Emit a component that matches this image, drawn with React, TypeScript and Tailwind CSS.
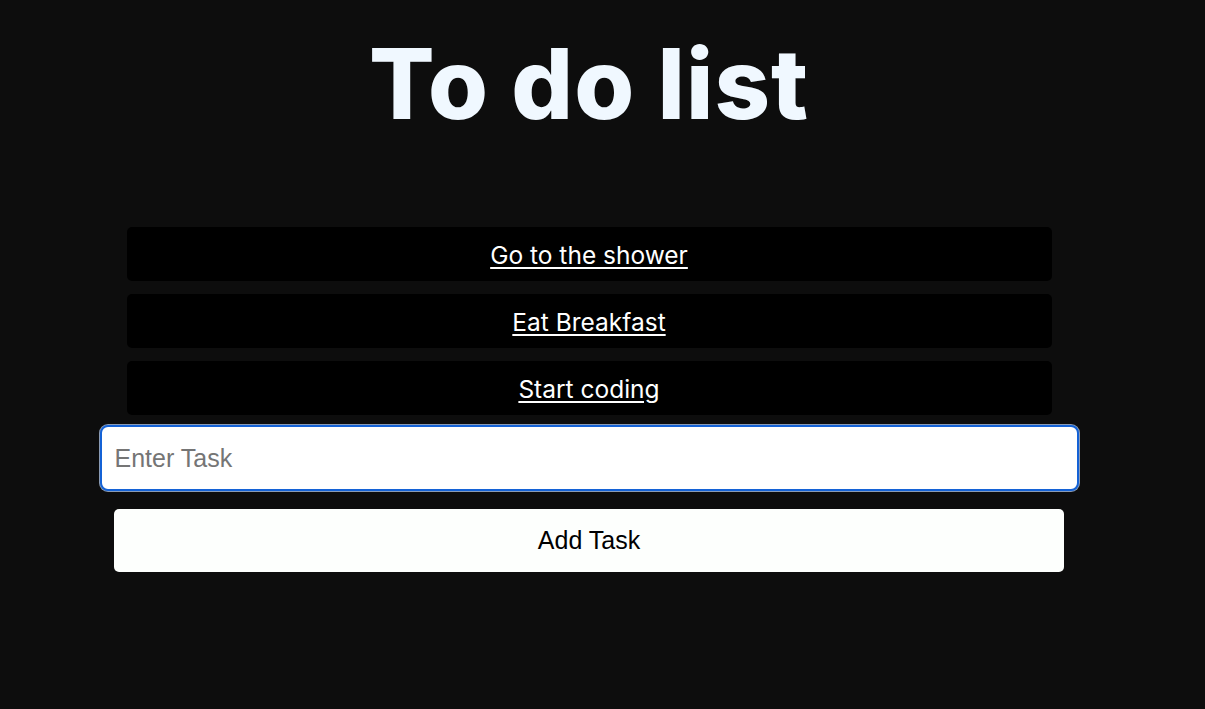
import { useState } from "react";

const initialTasks = ["Go to the shower", "Eat Breakfast", "Start coding"];

export default function App() {
  const [tasks, setTasks] = useState<string[]>(initialTasks);
  const [value, setValue] = useState("");

  const addTask = () => {
    if (!value.trim()) return;
    setTasks([...tasks, value.trim()]);
    setValue("");
  };

  return (
    <div className="min-h-[709px] w-full bg-[#0d0d0d]">
      <div className="w-[1178px] flex flex-col items-center">
        <h1 className="mt-[25px] text-[97px] leading-[117px] font-extrabold tracking-[1px] text-[#f0f8ff] font-['Inter',sans-serif]">
          To do list
        </h1>

        <ul className="mt-[85px] w-[925px] flex flex-col gap-[13px]">
          {tasks.map((task) => (
            <li
              key={task}
              className="h-[54px] pt-[1px] rounded-[5px] bg-black flex items-center justify-center"
            >
              <a
                href="#"
                className="text-[24.5px] leading-[30px] text-white underline underline-offset-[3px] font-['Inter',sans-serif]"
              >
                {task}
              </a>
            </li>
          ))}
        </ul>

        <input
          value={value}
          onChange={(e) => setValue(e.target.value)}
          placeholder="Enter Task"
          className="mt-[10px] w-[979px] h-[66px] rounded-[8px] bg-white border-2 border-[#1462d6] shadow-[0_0_0_1px_#8a9bb5] px-[13px] text-[25px] text-black placeholder:text-[#757575] outline-none font-['Liberation_Sans',Arial,sans-serif]"
        />

        <button
          onClick={addTask}
          className="mt-[18px] w-[950px] h-[63px] rounded-[5px] bg-[#fdfffd] text-black text-[25px] font-['Liberation_Sans',Arial,sans-serif]"
        >
          Add Task
        </button>
      </div>
    </div>
  );
}
